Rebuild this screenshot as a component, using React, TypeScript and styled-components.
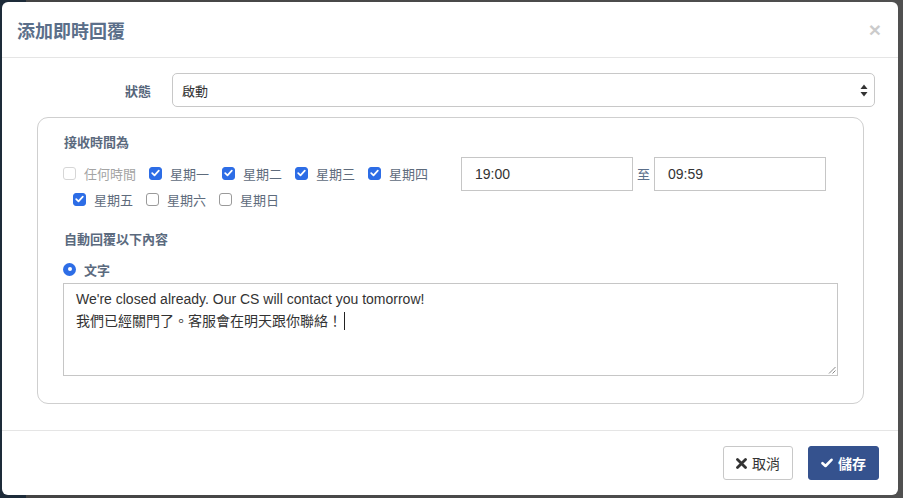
import React from 'react';
import styled, { createGlobalStyle } from 'styled-components';

const GlobalStyle = createGlobalStyle`
  html, body {
    margin: 0;
    padding: 0;
    width: 903px;
    height: 498px;
    overflow: hidden;
  }
  body {
    background: linear-gradient(90deg, #1d2b39 0px, #1d2b39 26px, #444 26px, #505050 100%);
    font-family: "Liberation Sans", "Noto Sans CJK TC", sans-serif;
    color: #333;
  }
  * { box-sizing: border-box; }
`;

const Backdrop = styled.div`
  width: 903px;
  height: 498px;
  padding: 2px 5px 3px 2px;
`;

const Modal = styled.div`
  background: #fff;
  border-radius: 6px;
  height: 493px;
  display: flex;
  flex-direction: column;
`;

const Header = styled.div`
  height: 56px;
  border-bottom: 1px solid #e5e5e5;
  display: flex;
  align-items: center;
  justify-content: space-between;
  padding: 0 17px 0 15px;
`;

const Title = styled.h4`
  margin: 0;
  font-size: 18px;
  font-weight: 700;
  color: #5b6f8a;
`;

const Close = styled.span`
  font-size: 21px;
  font-weight: 700;
  color: #000;
  opacity: 0.2;
  line-height: 1;
`;

const Body = styled.div`
  padding: 15px 19px 25px 15px;
  flex: 1;
`;

const FormRow = styled.div`
  display: grid;
  grid-template-columns: 134px 1fr;
  column-gap: 21px;
  align-items: center;
  margin: 0 4px 10px 0;
`;

const Label = styled.label`
  text-align: right;
  font-size: 13px;
  font-weight: 700;
  color: #55657a;
`;

const Select = styled.div`
  height: 34px;
  border: 1px solid #c8c8c8;
  border-radius: 5px;
  display: flex;
  align-items: center;
  justify-content: space-between;
  padding: 0 6px 0 9px;
  font-size: 13px;
  color: #333;
`;

const Fieldset = styled.div`
  margin: 0 15px 0 20px;
  border: 1px solid #cfcfcf;
  border-radius: 11px;
  padding: 16px 25px 27px 25px;
`;

const SectionTitle = styled.div`
  font-size: 13px;
  font-weight: 700;
  color: #5b6a7e;
  line-height: 18px;
  margin-left: 1px;
`;

const TimeGrid = styled.div`
  display: grid;
  grid-template-columns: 388px 1fr;
  column-gap: 10px;
  align-items: start;
  margin-top: 5px;
`;

const CheckList = styled.div`
  display: flex;
  flex-wrap: wrap;
  padding-top: 3px;
`;

const CheckItem = styled.label<{ $disabled?: boolean }>`
  display: flex;
  align-items: center;
  height: 26px;
  margin-left: 10px;
  margin-right: 3px;
  font-size: 13px;
  color: ${(p) => (p.$disabled ? '#a4a4a4' : '#5e6b7c')};
  &:first-child { margin-left: 0; }
`;

const Box = styled.span<{ $checked?: boolean; $disabled?: boolean }>`
  width: 13px;
  height: 13px;
  border-radius: 3px;
  margin-right: 8px;
  display: inline-flex;
  align-items: center;
  justify-content: center;
  background: ${(p) => (p.$checked ? '#2d6de6' : '#fff')};
  border: 1px solid ${(p) => (p.$checked ? '#2d6de6' : p.$disabled ? '#d6d6d6' : '#9a9a9a')};
`;

const TimeRow = styled.div`
  display: flex;
  align-items: flex-start;
`;

const TimeInput = styled.div`
  width: 172px;
  height: 34px;
  border: 1px solid #c6c6c6;
  display: flex;
  align-items: center;
  padding-left: 13px;
  font-size: 14px;
  color: #333;
`;

const To = styled.span`
  font-size: 13px;
  color: #5b6f8a;
  width: 21px;
  padding-left: 4px;
  margin-top: 7px;
`;

const ReplyTitle = styled(SectionTitle)`
  margin-top: 19px;
`;

const RadioRow = styled.div`
  display: flex;
  align-items: center;
  height: 20px;
  margin-top: 10px;
  margin-bottom: 4px;
  font-size: 13px;
  font-weight: 700;
  color: #5b6a7e;
`;

const Radio = styled.span`
  width: 13px;
  height: 13px;
  border-radius: 50%;
  background: #2d6de6;
  margin-right: 8px;
  display: inline-flex;
  align-items: center;
  justify-content: center;
  &::after {
    content: '';
    width: 4px;
    height: 4px;
    border-radius: 50%;
    background: #fff;
  }
`;

const MessageBox = styled.div`
  position: relative;
  width: 100%;
  height: 93px;
  border: 1px solid #c6c6c6;
  padding: 4px 12px;
  font-size: 14px;
  line-height: 22px;
  color: #333;
  white-space: pre-wrap;
`;

const Caret = styled.span`
  display: inline-block;
  width: 1px;
  height: 18px;
  background: #222;
  vertical-align: -4px;
  margin-left: 2px;
`;

const Grip = styled.svg`
  position: absolute;
  right: 1px;
  bottom: 1px;
`;

const Footer = styled.div`
  border-top: 1px solid #e5e5e5;
  padding: 15px 19px 15px 15px;
  display: flex;
  justify-content: flex-end;
  gap: 15px;
`;

const Button = styled.button<{ $primary?: boolean }>`
  height: 34px;
  padding: 0 12px;
  border-radius: 3px;
  display: flex;
  align-items: center;
  gap: 5px;
  font-family: "Liberation Sans", "Noto Sans CJK TC", sans-serif;
  font-size: 14px;
  font-weight: ${(p) => (p.$primary ? 700 : 400)};
  color: ${(p) => (p.$primary ? '#fff' : '#333')};
  background: ${(p) => (p.$primary ? '#35528e' : '#fff')};
  border: 1px solid ${(p) => (p.$primary ? '#35528e' : '#c8c8c8')};
`;

const Tick = () => (
  <svg width="9" height="8" viewBox="0 0 9 8">
    <path d="M1.2 4.2 L3.5 6.4 L7.8 1.6" fill="none" stroke="#fff" strokeWidth="1.7" strokeLinecap="round" strokeLinejoin="round" />
  </svg>
);

const Arrows = () => (
  <svg width="8" height="13" viewBox="0 0 8 13">
    <path d="M4 0.5 L7.5 5 L0.5 5 Z" fill="#333" />
    <path d="M4 12.5 L7.5 8 L0.5 8 Z" fill="#333" />
  </svg>
);

const TimesIcon = () => (
  <svg width="11" height="11" viewBox="0 0 11 11">
    <path d="M1.5 1.5 L9.5 9.5 M9.5 1.5 L1.5 9.5" stroke="#333" strokeWidth="2.8" strokeLinecap="round" />
  </svg>
);

const CheckIcon = () => (
  <svg width="12" height="10" viewBox="0 0 12 10">
    <path d="M1.5 5.2 L4.5 8 L10.5 1.8" fill="none" stroke="#fff" strokeWidth="2.6" strokeLinecap="round" strokeLinejoin="round" />
  </svg>
);

const days = [
  { label: '任何時間', checked: false, disabled: true },
  { label: '星期一', checked: true },
  { label: '星期二', checked: true },
  { label: '星期三', checked: true },
  { label: '星期四', checked: true },
  { label: '星期五', checked: true },
  { label: '星期六', checked: false },
  { label: '星期日', checked: false },
];

export default function App() {
  return (
    <>
      <GlobalStyle />
      <Backdrop>
        <Modal>
          <Header>
            <Title>添加即時回覆</Title>
            <Close>×</Close>
          </Header>
          <Body>
            <FormRow>
              <Label>狀態</Label>
              <Select>
                <span>啟動</span>
                <Arrows />
              </Select>
            </FormRow>
            <Fieldset>
              <SectionTitle>接收時間為</SectionTitle>
              <TimeGrid>
                <CheckList>
                  {days.map((d) => (
                    <CheckItem key={d.label} $disabled={d.disabled}>
                      <Box $checked={d.checked} $disabled={d.disabled}>
                        {d.checked && <Tick />}
                      </Box>
                      {d.label}
                    </CheckItem>
                  ))}
                </CheckList>
                <TimeRow>
                  <TimeInput>19:00</TimeInput>
                  <To>至</To>
                  <TimeInput>09:59</TimeInput>
                </TimeRow>
              </TimeGrid>
              <ReplyTitle>自動回覆以下內容</ReplyTitle>
              <RadioRow>
                <Radio />
                文字
              </RadioRow>
              <MessageBox>
                {"We're closed already. Our CS will contact you tomorrow!\n我們已經關門了。客服會在明天跟你聯絡！"}
                <Caret />
                <Grip width="8" height="8" viewBox="0 0 8 8">
                  <path d="M7.5 1 L1 7.5 M7.5 4.5 L4.5 7.5" stroke="#888" strokeWidth="1" />
                </Grip>
              </MessageBox>
            </Fieldset>
          </Body>
          <Footer>
            <Button>
              <TimesIcon />
              取消
            </Button>
            <Button $primary>
              <CheckIcon />
              儲存
            </Button>
          </Footer>
        </Modal>
      </Backdrop>
    </>
  );
}
